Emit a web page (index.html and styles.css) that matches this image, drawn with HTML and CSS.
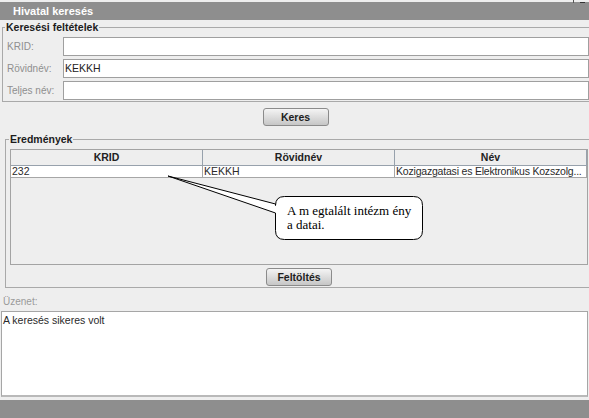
FILE: index.html
```html
<!DOCTYPE html>
<html lang="hu">
<head>
<meta charset="utf-8">
<title>Hivatal keresés</title>
<link rel="stylesheet" href="styles.css">
</head>
<body>
<div class="window">
  <div class="titlebar">Hivatal keresés</div>
  <fieldset class="criteria">
    <legend>Keresési feltételek</legend>
    <div class="row"><label>KRID:</label><div class="field"></div></div>
    <div class="row"><label>Rövidnév:</label><div class="field">KEKKH</div></div>
    <div class="row"><label>Teljes név:</label><div class="field"></div></div>
  </fieldset>
  <div class="btnrow keresrow"><button class="btn">Keres</button></div>
  <fieldset class="results">
    <legend>Eredmények</legend>
    <div class="tablebox">
      <div class="grid">
        <div class="th">KRID</div>
        <div class="th">Rövidnév</div>
        <div class="th">Név</div>
        <div class="td">232</div>
        <div class="td">KEKKH</div>
        <div class="td name">Kozigazgatasi es Elektronikus Kozszolg...</div>
      </div>
    </div>
    <div class="btnrow feltrow"><button class="btn">Feltöltés</button></div>
  </fieldset>
  <div class="msglabel">Üzenet:</div>
  <div class="msgbox">A keresés sikeres volt</div>
  <div class="statusbar"></div>

  <div class="corner"></div>
  <div class="callout">
    <svg class="callout-shape" width="589" height="418" viewBox="0 0 589 418">
      <path d="M284.5 196.5 H413.5 Q422.5 196.5 422.5 205.5 V230.5 Q422.5 239.5 413.5 239.5 H284.5 Q275.5 239.5 275.5 230.5 V213 L168 176 L275.5 204 V205.5 Q275.5 196.5 284.5 196.5 Z" fill="#ffffff" stroke="#000000" stroke-width="1"/>
    </svg>
    <div class="callout-text">
      <div class="callout-line">A m egtalált intézm ény</div>
      <div class="callout-line">a datai.</div>
    </div>
  </div>
</div>
</body>
</html>
```
FILE: styles.css
```css
html, body {
  margin: 0;
  padding: 0;
}
body {
  width: 589px;
  height: 418px;
  overflow: hidden;
  background: #eeeeee;
  font-family: "Liberation Sans", Arial, sans-serif;
  font-size: 10.5px;
  color: #333333;
}
.window {
  position: relative;
  width: 589px;
  height: 418px;
  display: flex;
  flex-direction: column;
}
.titlebar {
  margin-top: 2px;
  height: 18px;
  flex: none;
  background: #8e8e8e;
  color: #ffffff;
  font-weight: bold;
  font-size: 11px;
  line-height: 18px;
  padding-left: 13px;
}
fieldset {
  margin: 0;
  border: 1px solid #a9a9a9;
  min-width: 0;
  flex: none;
}
legend {
  padding: 0 1px;
  margin-left: -2px;
  font-weight: bold;
  font-size: 10.5px;
  line-height: 13px;
  color: #1c1c1c;
}
.criteria {
  margin: 1px -4px 0 2px;
  padding: 3px 3px 1px 4px;
}
.row {
  display: flex;
  align-items: center;
  height: 19px;
}
.row + .row {
  margin-top: 3px;
}
.row label {
  width: 56px;
  flex: none;
  color: #8f8f8f;
  font-size: 10px;
}
.field {
  flex: 1;
  height: 19px;
  box-sizing: border-box;
  border: 1px solid #9f9f9f;
  background: #ffffff;
  padding-left: 1px;
  line-height: 17px;
  color: #222222;
}
.btnrow {
  display: flex;
  justify-content: center;
  flex: none;
}
.keresrow {
  margin-top: 6px;
  padding-left: 2px;
}
.feltrow {
  margin-top: 3px;
}
.btn {
  width: 66px;
  height: 18px;
  box-sizing: border-box;
  border: 1px solid #8b8b8b;
  border-radius: 3px;
  background: linear-gradient(#f4f4f4, #c6c6c6);
  font-family: "Liberation Sans", Arial, sans-serif;
  font-weight: bold;
  font-size: 10.5px;
  color: #1e1e1e;
  padding: 0;
  line-height: 16px;
}
.results {
  margin: 7px -4px 0 5px;
  padding: 3px 4px 1px 4px;
}
.results legend {
  margin-left: -1px;
}
.tablebox {
  width: 578px;
  height: 116px;
  box-sizing: border-box;
  border: 1px solid #a3a3a3;
  background: #eeeeee;
}
.grid {
  display: grid;
  grid-template-columns: 192px 192px 192px;
}
.th {
  height: 15px;
  line-height: 15px;
  border-right: 1px solid #97a1ac;
  border-bottom: 1px solid #97a1ac;
  text-align: center;
  font-weight: bold;
  color: #222222;
  background: #eeeeee;
}
.td {
  height: 11px;
  line-height: 11px;
  background: #ffffff;
  border-right: 1px solid #a6a6a6;
  border-bottom: 1px solid #a6a6a6;
  padding-left: 1px;
  white-space: nowrap;
  overflow: hidden;
  color: #2a2a2a;
}
.td.name {
  letter-spacing: -0.2px;
}
.msglabel {
  margin-top: 8px;
  height: 12px;
  line-height: 12px;
  padding-left: 3px;
  font-size: 10px;
  color: #9a9a9a;
  flex: none;
}
.msgbox {
  margin: 3px 1px 0 1px;
  height: 86px;
  box-sizing: border-box;
  border: 1px solid #a6a6a6;
  border-bottom: 2px solid #b9b9b9;
  background: #ffffff;
  padding: 2px 1px;
  line-height: 12px;
  color: #2a2a2a;
  flex: none;
}
.statusbar {
  margin-top: 3px;
  height: 18px;
  background: #8e8e8e;
  flex: none;
}
.corner {
  position: absolute;
  left: 573px;
  top: 0;
  width: 11px;
  height: 3px;
  border-left: 1px solid #555555;
  background: linear-gradient(to right, transparent 6px, #333333 6px);
  background-size: 100% 1px;
  background-position: 0 2px;
  background-repeat: no-repeat;
}
.callout {
  position: absolute;
  left: 0;
  top: 0;
  width: 589px;
  height: 418px;
  pointer-events: none;
}
.callout-shape {
  position: absolute;
  left: 0;
  top: 0;
}
.callout-text {
  position: absolute;
  left: 287px;
  top: 204px;
  font-family: "Liberation Serif", "Times New Roman", serif;
  font-size: 13px;
  color: #000000;
  white-space: nowrap;
}
.callout-line {
  height: 14px;
  line-height: 14px;
}
```
